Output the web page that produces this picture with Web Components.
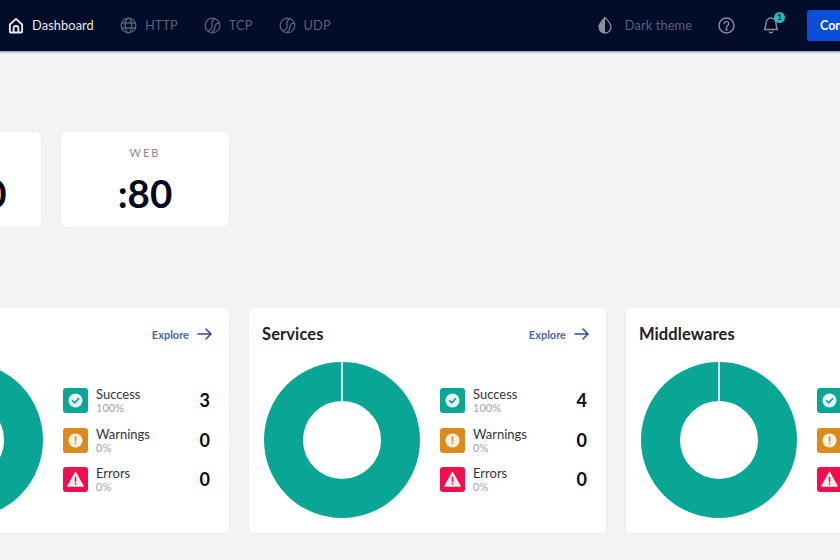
<!DOCTYPE html>
<html>
<head>
<meta charset="utf-8">
<style>
  html, body { margin: 0; height: 100%; overflow: hidden; }
  body { background: #f1f3f5; font-family: "Lato", "Open Sans", sans-serif; width: 840px; height: 560px; }
  main { display: flex; flex-direction: column; margin-left: -127px; width: 1300px; }
  .entries { display: flex; gap: 20px; margin-top: 81px; }
  .charts { display: flex; gap: 20px; margin: 81px 0 0 -1px; }
  svg { display: block; }
</style>
</head>
<body>
<app-navbar>
  <nav-item slot="left" active label="Dashboard">
    <svg slot="icon" width="16" height="17" viewBox="0 0 17 18" fill="none" stroke="currentColor" stroke-width="2" stroke-linejoin="round"><path d="M2 8 8.500 2 15 8v7.500a1 1 0 0 1-1 1H3a1 1 0 0 1-1-1z"/><path d="M6 16.500V12a2.500 2.500 0 0 1 5 0v4.500"/></svg>
  </nav-item>
  <nav-item slot="left" label="HTTP">
    <svg slot="icon" width="17" height="17" viewBox="0 0 17 17" fill="none" stroke="currentColor" stroke-width="1.300"><circle cx="8.500" cy="8.500" r="7.300"/><ellipse cx="8.500" cy="8.500" rx="3.300" ry="7.300"/><path d="M1.500 6h14M1.500 11h14"/></svg>
  </nav-item>
  <nav-item slot="left" label="TCP">
    <svg slot="icon" width="17" height="17" viewBox="0 0 17 17" fill="none" stroke="currentColor" stroke-width="1.300"><circle cx="8.500" cy="8.500" r="7.300"/><path d="M11 1.800C8 3 7.500 5.500 8 8s-1 5-4.500 5.800"/><path d="M15 6c-3 .2-4 2-4.200 4.500S9.500 14.500 7.500 15.500"/></svg>
  </nav-item>
  <nav-item slot="left" label="UDP">
    <svg slot="icon" width="17" height="17" viewBox="0 0 17 17" fill="none" stroke="currentColor" stroke-width="1.300"><circle cx="8.500" cy="8.500" r="7.300"/><path d="M11 1.800C8 3 7.500 5.500 8 8s-1 5-4.500 5.800"/><path d="M15 6c-3 .2-4 2-4.200 4.500S9.500 14.500 7.500 15.500"/></svg>
  </nav-item>

  <nav-item slot="right" label="Dark theme" class="theme" spaced>
    <svg slot="icon" width="16" height="18" viewBox="0 0 16 18"><path fill="none" stroke="#8a8f9e" stroke-width="1.300" d="M8 1.500c2.800 3.200 6 5.900 6 9.500a6 6 0 0 1-12 0c0-3.600 3.200-6.300 6-9.500z"/><path fill="#8a8f9e" d="M8 1.500v15.500a6 6 0 0 1-6-6c0-3.600 3.200-6.300 6-9.500z"/></svg>
  </nav-item>
  <span slot="right" class="plain help">
    <svg width="17" height="17" viewBox="0 0 17 17" fill="none" stroke="#8a8f9e" stroke-width="1.400" stroke-linecap="round"><circle cx="8.500" cy="8.500" r="7.500"/><path d="M6.300 6.600a2.200 2.200 0 1 1 3.400 1.900c-.8.500-1.200.9-1.200 1.700"/><circle cx="8.500" cy="12.500" r=".5" fill="#8a8f9e"/></svg>
  </span>
  <notify-bell slot="right" count="1"></notify-bell>
  <blue-button slot="right">Connect</blue-button>
</app-navbar>

<main>
  <section class="entries">
    <entry-card name="TRAEFIK" port=":8080"></entry-card>
    <entry-card name="WEB" port=":80"></entry-card>
  </section>
  <section class="charts">
    <stat-card title="Routers" count="3" explore></stat-card>
    <stat-card title="Services" count="4" explore></stat-card>
    <stat-card title="Middlewares" count="5"></stat-card>
  </section>
</main>

<script>
class AppNavbar extends HTMLElement {
  constructor() {
    super();
    this.attachShadow({ mode: "open" });
    this.shadowRoot.innerHTML = `
      <style>
        :host {
          display: flex;
          align-items: center;
          justify-content: space-between;
          height: 51px;
          box-sizing: border-box;
          padding: 0 0 1px 7px;
          width: 893px;
          background: #030d2a;
          box-shadow: 0 1px 2px rgba(40, 50, 90, 0.55);
          position: relative;
        }
        .group { display: flex; align-items: center; }
        .left { gap: 24px; }
        ::slotted(.plain) { display: block; margin-left: 25px; }
      </style>
      <div class="group left"><slot name="left"></slot></div>
      <div class="group right"><slot name="right"></slot></div>
    `;
  }
}

class NavItem extends HTMLElement {
  constructor() {
    super();
    this.attachShadow({ mode: "open" });
    const label = this.getAttribute("label") ?? "";
    const active = this.hasAttribute("active");
    this.shadowRoot.innerHTML = `
      <style>
        :host {
          display: flex;
          align-items: center;
          gap: ${this.hasAttribute("spaced") ? 12 : 8}px;
          height: 36px;
          padding: 0 1px;
          font-size: 12.8px;
          letter-spacing: 0.1px;
          color: ${active ? "#e6e8ee" : "#5a6076"};
        }
        .icon { display: block; }
      </style>
      <span class="icon"><slot name="icon"></slot></span>
      <span>${label}</span>
    `;
  }
}

class NotifyBell extends HTMLElement {
  constructor() {
    super();
    this.attachShadow({ mode: "open" });
    this.shadowRoot.innerHTML = `
      <style>
        :host { display: block; position: relative; width: 18px; height: 18px; margin-left: 28px; }
        .badge {
          position: absolute; top: -4px; right: -4px;
          width: 11px; height: 11px; border-radius: 50%;
          background: #2bb8ad; color: #04122f;
          font: 700 8px/11px "Lato", sans-serif; text-align: center;
        }
      </style>
      <svg width="17" height="18" viewBox="0 0 17 18" fill="none" stroke="#8a8f9e" stroke-width="1.400" stroke-linejoin="round" style="display:block"><path d="M8 2a5 5 0 0 0-5 5c0 4-1.500 5.500-1.500 6.500h13C14.500 12.500 13 11 13 7a5 5 0 0 0-5-5z"/><path d="M6 15.500a2.200 2.200 0 0 0 4 0"/></svg>
      <span class="badge">${this.getAttribute("count") ?? ""}</span>
    `;
  }
}

class BlueButton extends HTMLElement {
  constructor() {
    super();
    this.attachShadow({ mode: "open" });
    this.shadowRoot.innerHTML = `
      <style>
        :host {
          display: block;
          margin: 1px 0 0 26px;
          height: 31px;
          width: 73px;
          background: #0b4fd8;
          border-radius: 3px;
          color: #fff;
          font-size: 12.5px;
          font-weight: 700;
          line-height: 31px;
          padding-left: 13px;
        }
      </style>
      <slot></slot>
    `;
  }
}

class EntryCard extends HTMLElement {
  constructor() {
    super();
    this.attachShadow({ mode: "open" });
    this.shadowRoot.innerHTML = `
      <style>
        :host {
          display: block;
          width: 168px;
          height: 95px;
          background: #fff;
          border-radius: 5px;
          box-shadow: 0 0 2px rgba(0, 0, 0, 0.08);
          text-align: center;
          color: #03071a;
        }
        .name { padding-top: 14px; font-size: 11px; line-height: 14px; letter-spacing: 2px; color: #8b8b90; }
        .port { margin-top: 11px; font-size: 38.500px; line-height: 44px; font-weight: 700; }
      </style>
      <div class="name">${this.getAttribute("name")}</div>
      <div class="port">${this.getAttribute("port")}</div>
    `;
  }
}

class StatusIcon extends HTMLElement {
  static glyphs = {
    success: `<circle cx="12.500" cy="12.500" r="7" fill="#e8f5f3"/><path d="m9.500 12.700 2.200 2.200 3.800-4.200" fill="none" stroke="#09a595" stroke-width="1.600" stroke-linecap="round" stroke-linejoin="round"/>`,
    warning: `<circle cx="12.500" cy="12.500" r="7" fill="#fbf1e2"/><path d="M12.500 9v4" stroke="#db8a1c" stroke-width="1.600" stroke-linecap="round"/><circle cx="12.500" cy="15.600" r=".9" fill="#db8a1c"/>`,
    error: `<path d="M12.500 5.500 20 19H5z" fill="#fdeef1" stroke="#fdeef1" stroke-width="1.500" stroke-linejoin="round"/><path d="M12.500 10.500v4" stroke="#ee0f4c" stroke-width="1.600" stroke-linecap="round"/><circle cx="12.500" cy="16.800" r=".9" fill="#ee0f4c"/>`,
  };

  constructor() {
    super();
    this.attachShadow({ mode: "open" });
    const kind = this.getAttribute("kind");
    const bg = { success: "#09a595", warning: "#db8a1c", error: "#ee0f4c" }[kind];
    this.shadowRoot.innerHTML = `
      <style>
        :host { display: block; width: 25px; height: 25px; border-radius: 3px; background: ${bg}; }
      </style>
      <svg width="25" height="25" viewBox="0 0 25 25" style="display:block">${StatusIcon.glyphs[kind]}</svg>
    `;
  }
}

class LegendRow extends HTMLElement {
  constructor() {
    super();
    this.attachShadow({ mode: "open" });
    this.shadowRoot.innerHTML = `
      <style>
        :host { display: flex; align-items: center; height: 25px; width: 147px; }
        .text { margin-left: 8px; flex: 1; }
        .label { font-size: 13px; line-height: 14px; color: #33343c; }
        .pct { font-size: 11px; line-height: 13px; color: #a2a3a8; }
        .num { font-size: 18px; font-weight: 700; line-height: 20px; margin-top: -1px; color: #03071a; }
      </style>
      <status-icon kind="${this.getAttribute("kind")}"></status-icon>
      <div class="text">
        <div class="label">${this.getAttribute("label")}</div>
        <div class="pct">${this.getAttribute("pct")}</div>
      </div>
      <div class="num">${this.getAttribute("value")}</div>
    `;
  }
}

class StatCard extends HTMLElement {
  constructor() {
    super();
    this.attachShadow({ mode: "open" });
    const explore = this.hasAttribute("explore")
      ? `<a class="explore">Explore
           <svg width="15" height="12" viewBox="0 0 15 12" fill="none" stroke="#2b4a9a" stroke-width="1.500" stroke-linecap="round" stroke-linejoin="round"><path d="M1 6h13M9 1l5 5-5 5"/></svg>
         </a>`
      : "";
    this.shadowRoot.innerHTML = `
      <style>
        :host {
          display: block;
          box-sizing: border-box;
          width: 357px;
          height: 225px;
          padding: 0 17px 0 15px;
          background: #fff;
          border-radius: 5px;
          box-shadow: 0 0 2px rgba(0, 0, 0, 0.08);
        }
        header { display: flex; justify-content: space-between; align-items: center; height: 52px; margin-bottom: 2px; }
        h2 { margin: 0 0 0 -2px; font-size: 16.500px; font-weight: 700; letter-spacing: 0.1px; color: #202128; }
        .explore { display: flex; align-items: center; gap: 8px; font-size: 11px; font-weight: 700; color: #4a68b0; }
        .body { display: flex; align-items: center; justify-content: space-between; }
        .legend { display: flex; flex-direction: column; gap: 14.500px; margin-right: 2px; }
      </style>
      <header><h2>${this.getAttribute("title")}</h2>${explore}</header>
      <div class="body">
        <svg width="156" height="156" viewBox="0 0 156 156" style="display:block">
          <circle cx="78" cy="78" r="58.500" fill="none" stroke="#09a595" stroke-width="39"/>
          <rect x="77.200" y="0" width="1.600" height="39" fill="#fff"/>
        </svg>
        <div class="legend">
          <legend-row kind="success" label="Success" pct="100%" value="${this.getAttribute("count")}"></legend-row>
          <legend-row kind="warning" label="Warnings" pct="0%" value="0"></legend-row>
          <legend-row kind="error" label="Errors" pct="0%" value="0"></legend-row>
        </div>
      </div>
    `;
  }
}

customElements.define("app-navbar", AppNavbar);
customElements.define("nav-item", NavItem);
customElements.define("notify-bell", NotifyBell);
customElements.define("blue-button", BlueButton);
customElements.define("entry-card", EntryCard);
customElements.define("status-icon", StatusIcon);
customElements.define("legend-row", LegendRow);
customElements.define("stat-card", StatCard);
</script>
</body>
</html>
